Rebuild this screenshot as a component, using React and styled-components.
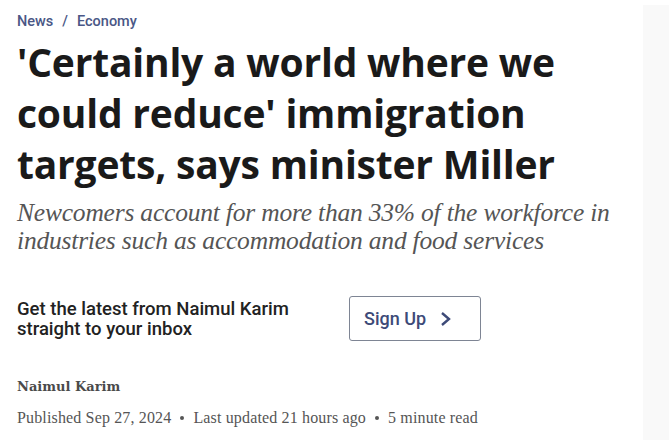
import React from "react";
import styled, { createGlobalStyle } from "styled-components";

const GlobalStyle = createGlobalStyle`
  html, body {
    margin: 0;
    padding: 0;
    background: #ffffff;
  }
  body {
    width: 669px;
    height: 444px;
    overflow: hidden;
  }
`;

const Page = styled.div`
  display: flex;
  width: 669px;
  height: 444px;
`;

const Article = styled.article`
  flex: 1;
  padding: 13px 0 0 17px;
`;

const Aside = styled.aside`
  width: 26px;
  margin: 5px 0 4px;
  background: #f9f9f9;
`;

const Crumbs = styled.nav`
  display: flex;
  gap: 9px;
  font-family: "Roboto", "Liberation Sans", sans-serif;
  font-size: 14.5px;
  font-weight: 500;
  line-height: 18px;
  color: #4a5786;
`;

const Title = styled.h1`
  width: 580px;
  margin: 5px 0 0;
  font-family: "Open Sans", "Liberation Sans", sans-serif;
  font-size: 39px;
  font-weight: 700;
  line-height: 51px;
  letter-spacing: -0.2px;
  color: #1a1a1a;
`;

const Deck = styled.p`
  width: 625px;
  margin: 10px 0 0;
  font-family: "Liberation Serif", serif;
  font-style: italic;
  font-size: 25.5px;
  line-height: 28px;
  letter-spacing: -0.2px;
  color: #555555;
`;

const SignupRow = styled.div`
  display: flex;
  align-items: center;
  margin-top: 41px;
`;

const SignupText = styled.div`
  width: 332px;
  font-family: "Roboto", "Liberation Sans", sans-serif;
  font-size: 18.5px;
  font-weight: 500;
  line-height: 20px;
  color: #222222;
`;

const SignupButton = styled.button`
  display: flex;
  align-items: center;
  gap: 13px;
  box-sizing: border-box;
  width: 132px;
  height: 45px;
  padding: 0 0 0 14px;
  border: 1px solid #7e8594;
  border-radius: 3px;
  background: #ffffff;
  font-family: "Roboto", "Liberation Sans", sans-serif;
  font-size: 18px;
  font-weight: 500;
  color: #3d4a78;
`;

const Byline = styled.div`
  margin-top: 38px;
  font-family: "DejaVu Serif", serif;
  font-size: 13px;
  font-weight: 700;
  color: #4a4a4a;
`;

const Meta = styled.div`
  display: flex;
  align-items: center;
  gap: 9px;
  margin-top: 15px;
  font-family: "Liberation Serif", serif;
  font-size: 16px;
  letter-spacing: 0.15px;
  color: #555555;
`;

const Dot = styled.span`
  width: 4px;
  height: 4px;
  border-radius: 50%;
  background: #555555;
`;

function Chevron() {
  return (
    <svg width="13" height="16" viewBox="0 0 13 16" fill="none">
      <path d="M3 2l7 6-7 6" stroke="#3d4a78" strokeWidth="2.4" />
    </svg>
  );
}

export default function App() {
  return (
    <>
      <GlobalStyle />
      <Page>
        <Article>
          <Crumbs>
            <span>News</span>
            <span>/</span>
            <span>Economy</span>
          </Crumbs>
          <Title>
            'Certainly a world where we could reduce' immigration targets, says
            minister Miller
          </Title>
          <Deck>
            Newcomers account for more than 33% of the workforce in industries
            such as accommodation and food services
          </Deck>
          <SignupRow>
            <SignupText>
              Get the latest from Naimul Karim
              <br />
              straight to your inbox
            </SignupText>
            <SignupButton>
              Sign Up
              <Chevron />
            </SignupButton>
          </SignupRow>
          <Byline>Naimul Karim</Byline>
          <Meta>
            <span>Published Sep 27, 2024</span>
            <Dot />
            <span>Last updated 21 hours ago</span>
            <Dot />
            <span>5 minute read</span>
          </Meta>
        </Article>
        <Aside />
      </Page>
    </>
  );
}
